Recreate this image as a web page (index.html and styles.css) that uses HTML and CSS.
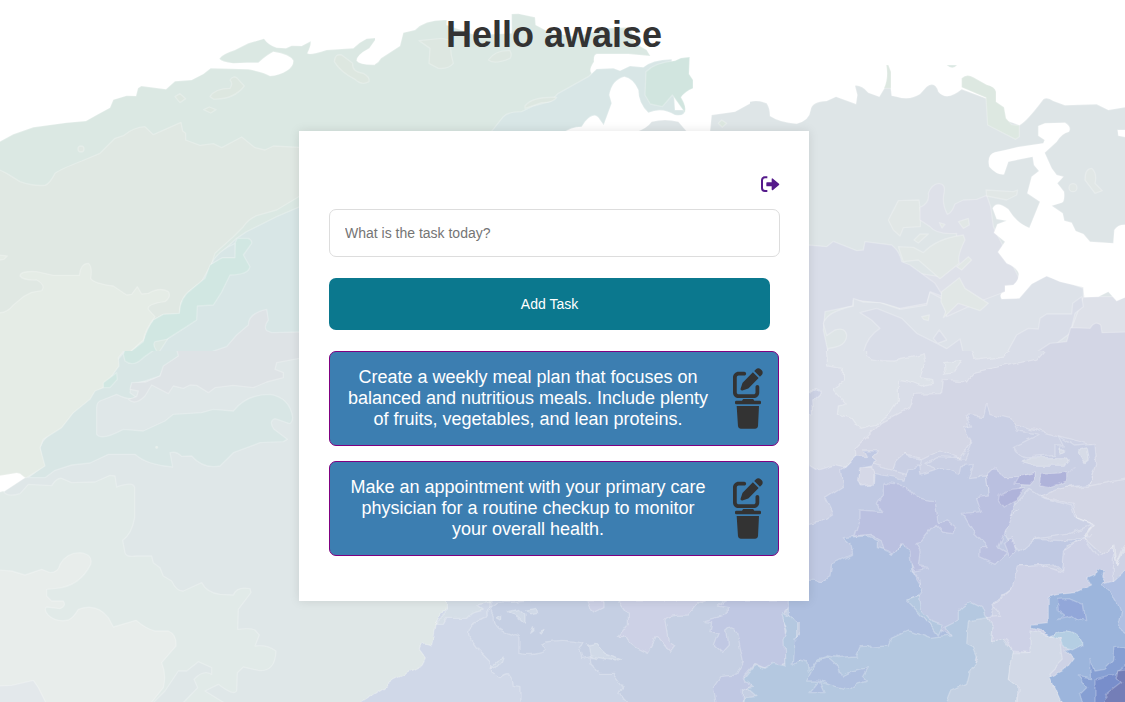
FILE: index.html
```html
<!DOCTYPE html>
<html lang="en">
<head>
<meta charset="utf-8">
<title>Hello awaise</title>
<link rel="stylesheet" href="styles.css">
</head>
<body>
<svg class="backdrop" viewBox="0 0 1125 702" aria-hidden="true">
  <defs>
    <!-- roughens the watercolour edges -->
    <filter id="rough" x="-5%" y="-5%" width="110%" height="110%" color-interpolation-filters="sRGB">
      <feTurbulence type="fractalNoise" baseFrequency="0.03" numOctaves="2" seed="4" result="noise"/>
      <feDisplacementMap in="SourceGraphic" in2="noise" scale="20" xChannelSelector="R" yChannelSelector="G"/>
    </filter>
  </defs>
  <!-- upper left wash -->
  <svg x="0" y="0" width="375" height="351" viewBox="0 0 1125 1053">
    <path fill="#dbe8e3" d="M-5 427L40 403 100 382 200 368 258 363 290 345 330 323 340 299 380 287 408 288 414 265 424 258 498 268 525 244 575 240 610 222 632 205 745 208Q790 216 810 228 840 225 860 212 880 200 880 182 870 162 820 155 800 165 775 188L740 188 700 190Q665 185 658 176 665 163 705 150L745 130 792 116Q805 135 830 143L858 145 875 137 905 138 932 124Q934 135 922 160 930 166 980 150L1060 145Q1080 125 1100 116L1130 114 1108 145Q1070 165 1070 182 1080 196 1130 194V1060H-5Z"/>
    <path fill="#e0e8e3" d="M-5 508L20 520 60 545Q100 559 135 556 150 550 165 520 180 508 245 483L300 460 345 415 370 407Q400 382 435 380L460 404 543 367 548 393 557 400 557 420 600 436 640 431 665 443 725 411 765 443 795 450 820 438 900 442H1130V1060H-5Z"/>
    <path fill="#dbe8e3" d="M900 588L830 630 770 647Q745 657 730 680L700 710 645 760 632 800 615 840Q560 870 542 910L538 940 490 943 460 960 430 1020 385 1060H1130V588Z"/>
    <path fill="#d8e6e6" d="M900 620L830 650 740 695 710 715 650 770 630 800 540 960 475 1060H1130V620Z"/>
    <path fill="#d1e7e2" d="M712 715L745 715Q757 722 755 730L730 765 750 800Q745 825 690 825L664 878 640 915 592 918 590 960 560 980 500 1018 465 1025Q455 1035 475 1060H385L430 1025Q440 985 460 960L490 943 538 940Q540 890 575 868L615 835 630 795 660 773 703 773 705 730Z"/>
    <path fill="#d8e6e6" d="M634 792Q650 755 705 730V773H667Z"/>
    <path fill="#dee3e6" d="M620 1060L680 1040 710 1005 745 975Q745 940 800 928L805 960Q790 980 800 992L815 998 900 996H1130V1060Z"/>
    <path fill="#e5ece6" d="M-5 938Q20 940 40 915L70 890 95 877 125 872Q138 855 110 840 70 842 60 828 60 812 110 815L160 826 238 826Q242 790 265 790 278 800 272 835 280 850 340 858 365 875 380 885L395 883 412 860 425 882 445 880Q480 860 505 875 515 890 495 905 440 912 445 928L465 950Q435 990 430 1020L385 1060H-5Z"/>
    <g fill="#dde7e0"><path d="M630 290Q645 265 690 265 700 250 690 240 700 225 712 235L733 258Q700 300 640 297Z"/><path d="M1003 185Q1005 160 1025 165L1058 190Q1055 215 1090 220 1110 230 1107 245 1085 258 1065 238 1020 215 1003 185Z"/><path d="M525 290L540 281 557 296 540 308Z"/><path d="M611 329L628 321 648 329 632 339Z"/></g>
    <circle cx="243" cy="447" r="9" fill="#e0e8e3"/><path d="M-5 765L22 768 12 778-5 781Z" fill="#e5ece6"/>
  </svg>
  <!-- behind the heading -->
  <svg x="375" y="0" width="375" height="140" viewBox="0 0 1125 420">
    <path fill="#dbe8e3" d="M-5 195Q10 190 18 175L75 138 85 98 120 90Q150 58 215 60V75L300 105 410 100V42L430 41 480 52 482 75 520 95 600 110 700 85 765 82 780 130 815 150 826 168 760 162H665Q655 165 657 185 640 210 650 220L560 390 540 425H-5Z"/>
    <path fill="#d8e6e6" d="M345 400L385 350Q400 335 440 335L475 318 525 305 550 280 640 230 665 207 715 205 735 212 765 198 805 202Q830 180 890 178L900 330 930 330Q930 350 900 345 860 320 820 338 790 310 790 270 775 235 748 230 710 240 703 285L710 310 686 375 675 360Q660 330 630 365L620 380Q585 380 565 400L540 425H330Z"/>
    <path fill="#d1e5df" d="M813 215Q840 188 900 182L918 174 944 171 942 222 954 240V265Q930 275 918 292 935 320 930 338L892 285 862 320 826 312 810 285Z"/>
    <path fill="#dee5e7" d="M785 395Q815 385 830 365 870 355 910 365L940 400 1005 395 1010 345 1080 335 1130 308V425H785Z"/>
    <path fill="#dde7e1" d="M132 122L200 115 230 122Q222 150 235 190 220 208 190 205L162 190 165 145ZM340 180Q360 150 405 152 412 165 405 175 360 195 340 180ZM450 318Q470 290 545 292 535 308 500 308L450 325Z"/>
    <path fill="#dce7e0" d="M1030 370L1040 360 1055 370 1042 382Z"/>
  </svg>
  <!-- upper right wash -->
  <svg x="750" y="0" width="375" height="351" viewBox="0 0 1125 1053">
    <path fill="#dee5e7" d="M-5 307Q20 297 50 310 60 325 60 348 90 368 140 371 178 362 182 330 185 305 230 303L258 290 318 312 322 285 315 257Q335 255 355 278L388 290 405 262H422L425 287 440 290Q480 302 510 282L530 260Q555 242 565 275 590 305 635 268L708 295 765 360 808 376Q830 365 880 298 892 290 910 303L945 316 1040 313 1075 330 1130 321V1060H-5Z"/>
    <path fill="#dde8e1" d="M635 262V235Q650 220 670 232L710 254Q735 260 738 275V305L762 322 768 355 785 374 808 376 808 410 797 418 713 375 708 293ZM402 265Q416 235 409 195H415L423 215V265Z"/><path fill="#dbe8e3" d="M590 195H621Q608 212 590 195Z"/>
    <path fill="#e1e7e6" d="M415 660L445 602 507 600 512 640 511 680 460 683 450 708 430 690Z"/>
    <path fill="#dee1e9" d="M510 622Q540 610 535 580 545 552 567 550 588 552 582 580 575 610 592 643 605 640 615 612L640 600 680 598 710 586 722 620 730 680 815 850 750 895 840 870 890 828 920 845 1000 863 1000 890H1130V1060H560L450 960 440 810 570 830 615 780 620 700Q560 705 540 680L510 660Z"/>
    <path fill="#d9dde8" d="M175 735L230 740 250 724 320 752 340 750 345 725 425 735Q450 755 455 785L480 795 555 850 580 890 540 875 530 910 450 925 400 910 310 900 308 918 225 935 220 990 235 1060H175Z"/>
    <path fill="#dde2e9" d="M220 970Q230 935 310 918V895L340 906 390 908 450 928 530 915 540 877 580 898 590 950 700 900 890 828 950 845 1000 865V890L965 985 960 1060H230L235 1045Q290 1040 290 1005 285 980 255 990L230 1007Z"/>
    <path fill="#d9dde8" d="M340 1060Q350 1010 390 985L365 960 330 938 380 925 455 955 500 1000 560 1030 590 1046 630 1017 640 1060ZM770 1060L800 1005 835 985 865 987 870 955 890 942 965 942 968 910 995 890 1000 920 975 940 960 1000 880 1060ZM550 1015L568 990 590 1020 563 1030Z"/>
    <path fill="#d3d6e5" d="M855 1060L900 1030 950 1025 962 983 1020 985Q1035 960 1052 975L1056 998 1130 996V1060Z"/>
    <path fill="#e1e7e6" d="M445 740L490 742 520 758Q560 715 640 705L645 720Q620 770 628 790L570 836 505 780 460 785ZM575 875L628 833 645 865 715 910 690 932 625 910 580 953 587 935 573 905ZM492 720L510 702 535 702 505 729ZM625 665L655 655 658 675 640 685ZM620 800L655 770 665 780 635 810ZM708 570L790 575 803 570 800 585 770 600 710 588ZM1005 540Q1005 505 1025 505 1042 520 1035 550L1057 572 1035 580Z"/>
    <circle cx="969" cy="563" r="12" fill="#e1e7e6"/><path fill="#e1e7e6" d="M568 668L585 673 576 684ZM515 950L538 945 535 962 521 958Z"/>
    <path fill="#fff" d="M865 378L885 370 945 368Q965 380 957 395 935 400 920 425L884 458 905 505 920 525 940 530 922 550 942 575Q945 605 935 608L905 617 938 640 943 662 965 668 977 693 1000 702 1020 725 1090 730 1093 690Q1105 672 1130 675V890L1100 903 1075 875 1045 890 1003 892 1000 862 930 845 890 828 845 852 808 895 755 897Q745 880 765 875V857L790 855Q808 840 806 820 798 800 770 790L744 756 765 725 732 698 742 673 770 662 740 657 728 625Q740 600 775 628 800 670 838 684L870 605 832 580 845 530 867 513 852 495 848 470 775 485 762 523Q740 525 718 500 710 465 735 457 770 450 805 441L880 430 884 420 865 407ZM1103 390L1130 390V412L1105 407Z"/>
  </svg>
  <!-- lower left wash -->
  <svg x="0" y="351" width="310" height="351" viewBox="0 0 930 1053">
    <path fill="#dfe7e8" d="M-5-5H935V1060H-5Z"/>
    <path fill="#d8e6e5" d="M380-5H590L530 20 490 55 480 75 435 90 395 100 390 125 410 140Q390 150 350 130L300 150Q290 155 290 170V250Q305 270 370 235L430 240 495 210 520 190 605 185 640 175 700 180Q740 130 810 130 870 140 878 200 875 225 860 215L825 203Q805 210 822 235L862 265 850 272 780 275 700 305 660 345Q610 355 575 315L545 316Q530 300 510 305L518 348Q440 342 405 310H325L270 336 215 342 165 358 135 380H85L130 345 120 290Q130 255 180 230Z"/>
    <path fill="#e5ece6" d="M-5-5H375L355 20 357 45 310 110 285 120 270 145 220 185 185 230 130 265 120 290 135 345 80 380-5 375Z"/>
    <path fill="#d1e7e2" d="M375-5H465L430 20Q400 50 375 30L370 10ZM350 65L352 85 330 110 310 110V95Z"/>
    <path fill="#dee3e6" d="M530-5L535 15 490 45 480 75 438 93 395 95 390 115 415 120 410 137 385 145Q405 165 435 135L455 102 505 128 520 105 550 112 570 102 590 103 625 125 645 110 700 103 760 110 800 93 850 80 850 65 825 55 830 35 935 15V-5Z"/>
    <path fill="#fff" d="M-5 375L50 366 60 368 75 380 10 423-5 426Z"/>
    <path fill="#e1eae8" d="M-5 425L10 420Q20 440 60 428L85 400 155 404Q170 380 185 382L215 395 285 393 330 373 345 375 350 408Q400 390 404 410V500Q395 550 368 568L375 605Q380 620 410 615H455L460 635 480 650 490 675 515 690Q530 722 550 720L605 695Q620 725 660 730L700 732Q710 705 750 713L753 725 715 775 713 835Q750 830 765 837L778 852 765 885Q800 880 828 900 825 965 775 958L730 948 712 965 710 1020Q700 1035 655 1000L615 1020 680 1060H-5Z"/>
    <path fill="#e8edeb" d="M-5 657L35 660 75 672 125 655 150 665Q175 665 180 640 200 605 240 605 280 610 272 640 240 705 170 712L140 715V735L155 750 190 750Q200 765 180 773L140 768Q130 775 145 793 170 815 205 807 220 800 235 775 290 755 325 800L340 828 408 808Q440 835 465 840L505 840Q530 850 528 885L485 935Q500 970 490 1010L450 1060H-5Z"/>
    <path fill="#e3e8eb" d="M-5 1005L35 1003 100 988 115 1010 140 1060H-5Z"/>
    <path fill="#dfe7e8" d="M455 1060L495 1020 535 960 560 960 595 932 635 950V970Q610 955 582 985L593 1010 545 1060Z"/><circle cx="470" cy="289" r="3" fill="#e5ece6"/>
  </svg>
  <!-- below the panel -->
  <svg x="300" y="590" width="520" height="112" viewBox="0 0 1560 336">
    <path fill="#dfe7e7" d="M-15-15H500V350H-15Z"/>
    <g filter="url(#rough)">
    <path fill="#d0d8e8" d="M437-15V50L405 105 395 165Q360 150 358 175L380 205 370 225 280 270 245 297 160 350H1580V-15Z"/>
    <path fill="#d5dee7" d="M437 20L435 80 405 103 430 103 440 85 500 85 515 70 550 60 530 45 600 30Z"/>
    <path fill="#cbd4e6" d="M570 55L545 90Q500 100 507 140L535 180 570 215 575 245 600 263Q635 230 640 290L660 293V350H1300V-15H570Z"/>
    <path fill="#c5cfe3" d="M570 55L590 40 690 33V-15H1580V350H990L960 310 970 290 940 250 895 250Q870 220 875 200L845 205 838 175 855 160Q800 145 740 156L722 162 735 182Q705 200 660 190V140Q650 125 635 135 575 120 580 75Z"/>
    <path fill="#cdd1e6" d="M955 30H1210L1185 50 1165 75Q1095 75 1095 92L1105 150 1125 165 1110 185 1070 140 1045 187 1000 165 970 140H955L985 100 985 70ZM862 30H912V50L880 66Z"/>
    <path fill="#c0c8e3" d="M1275 30H1490L1450 75 1460 130 1455 220 1400 235 1365 220 1330 260 1360 285 1330 300V350H1250L1240 290 1260 260 1310 255 1330 215 1310 125Q1295 105 1280 120L1285 165 1265 187 1240 165 1255 125 1230 125 1235 98 1215 95 1285 75 1285 50 1255 45Z"/>
    <path fill="#b4c8e0" d="M1330 350L1335 320 1365 317 1340 295 1365 292 1330 268 1365 225 1395 235 1420 220 1455 228 1452 150 1462 120 1445 70 1490 85 1490 215 1580 215V350Z"/>
    <path fill="#aebfdf" d="M1465-15H1580V225L1550 220 1525 235 1510 205 1480 225 1485 150 1505 125 1520 120 1500 95 1485 95 1465 75Z"/>
    <path fill="#d0d9e7" d="M625 65L655 58 675 75V100L655 82ZM680 60L710 55 713 70 690 75ZM865 165L885 160 915 190 962 205 950 213 870 198ZM570 235L590 215 610 207 605 222ZM590 80L605 73V88ZM717 122L735 115 722 131ZM692 130L700 110 702 122Z"/>
    </g>
  </svg>
  <!-- lower right wash -->
  <svg x="800" y="351" width="325" height="351" viewBox="0 0 975 1053">
    <path fill="#d9dde8" d="M-5-5H980V1060H-5Z"/>
    <g filter="url(#rough)">
    <path fill="#dde2e9" d="M75-15H200V20Q230 30 280 30L330 20 370 8 375 35 360 80 398 85 400 97 365 105 325 90 295 85V150L265 190 230 220 180 232 160 203 112 190 115 165 135 160 95 115 130 90V52L80 45ZM510-15H640L615 15 525 28ZM430 35L483 28 460 65 433 70Z"/>
    <path fill="#d3d6e5" d="M745-15L710 25 645 38 520 68 500 93 430 88 425 128 345 130 330 170 245 215 165 295 170 330 290 400 460 500H995V-15Z"/>
    <path fill="#cdd2e5" d="M5 330L50 358 100 343 130 350 165 325 280 355 315 308 370 325 420 300 475 325 515 270 500 200 590 205 870 280 885 340 870 405 820 430 830 500 880 520 850 550 870 560 910 615 940 600 950 640 995 560V1070H5ZM5 140L50 113 62 125 35 150 38 190 5 180Z"/>
    <path fill="#d3d6e5" d="M720 435L740 420 790 410 870 405 995 380V560L970 590 950 640 945 585 910 615 850 560 880 520 830 500 820 460Z"/>
    <path fill="#c9cfe4" d="M560 160L570 188 640 205 655 240 720 250 640 290Q640 310 680 318L765 310 765 285 790 285 775 255 820 285 885 280 890 340 870 400 790 410 720 435 600 520 500 450 455 370 375 340 415 320 495 325 515 275 490 230 515 225 498 192 550 200ZM280 360L290 330 315 308 335 320 365 325 360 345 320 370Z"/>
    <path fill="#d6dbe7" d="M665 330L690 320H795L805 330 795 343H700ZM835 300L862 293 868 325 855 335ZM780 290L795 300 780 308Z"/>
    <path fill="#c0c9e3" d="M165 318L200 320 190 300H235L215 318 228 328 215 345 175 355 180 400 215 403 222 367 315 385 325 355 355 345 360 370 425 350 480 370 485 345 520 340 505 380 560 375 570 480 620 545 650 580 700 565 810 570 875 548 800 585 785 660 760 640 660 645 640 710 590 745 580 770 560 850 500 900 5 900V520L70 510 100 490 75 440 130 405 125 360Z"/>
    <path fill="#d5d8e7" d="M177 350L215 348 222 370 220 400 185 405 173 388Z"/>
    <path fill="#cbd1e5" d="M600 520L655 480 630 475 690 415 730 440 815 465 825 500 875 520 800 550 700 565 660 600 620 560Z"/>
    <path fill="#bac0e0" d="M250 397L320 405Q335 450 405 452L415 515 440 510 467 530 455 545 425 540 405 520 365 570 345 575 360 600 355 645 385 650 340 660 320 610 300 575 285 610 255 605 245 570 210 550 165 555 180 510V480L245 485 232 460 250 430ZM560 370L580 352 615 380 645 380 680 370 645 440 640 480 595 590 620 605 585 640 540 620V590L565 590 525 550 490 490 545 485 530 440 565 435ZM610 575L635 560 650 600 630 622 620 600ZM335 660L360 690 362 715 340 690Z"/>
    <path fill="#afb3da" d="M645 400L660 375 705 365V385L690 402ZM720 405L725 370 790 365 825 353 800 365V390L745 410ZM595 450L598 433 635 415 675 410 655 440 610 468Z"/>
    <path fill="#aebfdf" d="M5 688H40L65 692 90 675 95 640 155 610 150 580 130 560 200 555 235 570 235 590 265 600 280 610 305 575 330 600 335 660 365 710 355 735 325 745 390 820 450 855 400 940 200 1070H-15V688Z"/>
    <path fill="#b4c8e0" d="M-15 920L20 930 25 960 50 925 85 915 115 920 170 915 180 890 265 885 270 865 325 840 390 862 450 855 435 830 475 810V780Q490 760 515 755L545 770 555 795 600 830 530 920 500 1070H-15ZM320 747L355 735 360 770 395 810 430 820 415 855 380 810Z"/>
    <path fill="#aebfdf" d="M20 990L50 930 85 920 115 945 125 975 155 960 205 950 190 975 205 990 170 1000 150 1015 80 1000 55 990ZM30 1025L60 990 75 1025Z"/>
    <path fill="#c3d0e2" d="M505 810L560 800 580 820 575 875 610 860 640 900 625 985 650 1000V1070H435L455 1020 500 1000 510 960 535 925 520 890 500 880Z"/>
    <path fill="#cdd1e6" d="M655 645L720 640 785 663 790 600 850 560 890 615 940 590V690L895 800 800 850 690 905 640 900 620 860 575 875 580 830 560 800 605 795 580 760 635 715Z"/>
    <path fill="#d2d9e7" d="M690 840L730 850 780 860 790 930 750 970 790 1070H650L655 1010 625 985 635 905 690 905Z"/>
    <path fill="#aebfe2" d="M905 700L940 690 995 640V1070H930Z"/>
    <path fill="#9cb5dc" d="M860 680L885 670 890 655 910 660 905 675 915 690 905 705Q950 730 965 785L955 830 995 860V1070H790L750 980 790 960 820 920 795 900 850 880Q840 850 800 840L750 855 730 840 695 832V820L745 815V740Q755 730 830 725L875 705Z"/>
    <path fill="#b4cee3" d="M755 855L785 840Q835 835 852 880L820 897 790 890 785 865Z"/>
    <path fill="#92a7d9" d="M772 745L810 743 850 760 857 812 830 805 815 795 770 803 795 790 775 775Z"/>
    <path fill="#869fd3" d="M870 925L885 960 915 955 940 930 945 890 995 885V1070H850L840 1030 860 1010 835 975 875 980Z"/>
    <path fill="#788ecb" d="M885 1070V985L940 970 995 930V1070Z"/>
    <path fill="#747eb7" d="M905 1070L920 1030 965 995 945 985 950 960 995 955V1070Z"/>
    </g>
  </svg>
</svg>
<main class="page">
  <h1 class="greeting">Hello awaise</h1>
  <section class="card">
    <a class="logout" aria-label="Log out"><svg width="20" height="18" viewBox="60 45 60 54"><path d="M82 52H75Q66 52 66 61V84Q66 93 75 93H82" fill="none" stroke="currentColor" stroke-width="6"/><path d="M81 67H95V58Q95 53 99 56L117 71Q119 73 117 75L99 90Q95 92 95 87V79H81Q79 79 79 77V69Q79 67 81 67Z" fill="currentColor"/></svg></a>
    <input class="task-input" type="text" placeholder="What is the task today?">
    <button class="add-button">Add Task</button>
    <div class="tasks">
      <article class="task"><p class="task-text">Create a weekly meal plan that focuses on balanced and nutritious meals. Include plenty of fruits, vegetables, and lean proteins.</p>
        <div class="actions">
          <svg width="30" height="30" viewBox="0 0 512 512"><path d="M471.6 21.7c-21.9-21.9-57.3-21.9-79.2 0L362.3 51.7l97.9 97.9 30.1-30.1c21.9-21.9 21.9-57.3 0-79.2L471.6 21.7zm-299.2 220c-6.1 6.1-10.8 13.6-13.5 21.9l-29.6 88.8c-2.9 8.6-.6 18.1 5.8 24.6s15.9 8.7 24.6 5.8l88.8-29.6c8.2-2.7 15.7-7.4 21.9-13.5L437.7 172.3 339.7 74.3 172.4 241.7zM96 64C43 64 0 107 0 160V416c0 53 43 96 96 96H352c53 0 96-43 96-96V320c0-17.7-14.3-32-32-32s-32 14.3-32 32v96c0 17.7-14.3 32-32 32H96c-17.7 0-32-14.3-32-32V160c0-17.7 14.3-32 32-32h96c17.7 0 32-14.3 32-32s-14.3-32-32-32H96z"/></svg>
          <svg width="30" height="32" viewBox="0 0 90 96"><path d="M29 5Q29 3 32 3H59Q62 3 62 5L64 8H80Q84 8 84 12V15Q84 19 80 19H10Q6 19 6 15V12Q6 8 10 8H27ZM11 24H78L75 85Q74 92 67 92H23Q16 92 15 85Z"/></svg>
        </div></article>
      <article class="task"><p class="task-text">Make an appointment with your primary care physician for a routine checkup to monitor your overall health.</p>
        <div class="actions">
          <svg width="30" height="30" viewBox="0 0 512 512"><path d="M471.6 21.7c-21.9-21.9-57.3-21.9-79.2 0L362.3 51.7l97.9 97.9 30.1-30.1c21.9-21.9 21.9-57.3 0-79.2L471.6 21.7zm-299.2 220c-6.1 6.1-10.8 13.6-13.5 21.9l-29.6 88.8c-2.9 8.6-.6 18.1 5.8 24.6s15.9 8.7 24.6 5.8l88.8-29.6c8.2-2.7 15.7-7.4 21.9-13.5L437.7 172.3 339.7 74.3 172.4 241.7zM96 64C43 64 0 107 0 160V416c0 53 43 96 96 96H352c53 0 96-43 96-96V320c0-17.7-14.3-32-32-32s-32 14.3-32 32v96c0 17.7-14.3 32-32 32H96c-17.7 0-32-14.3-32-32V160c0-17.7 14.3-32 32-32h96c17.7 0 32-14.3 32-32s-14.3-32-32-32H96z"/></svg>
          <svg width="30" height="32" viewBox="0 0 90 96"><path d="M29 5Q29 3 32 3H59Q62 3 62 5L64 8H80Q84 8 84 12V15Q84 19 80 19H10Q6 19 6 15V12Q6 8 10 8H27ZM11 24H78L75 85Q74 92 67 92H23Q16 92 15 85Z"/></svg>
        </div></article>
    </div>
  </section>
</main>
</body>
</html>
```
FILE: styles.css
```css
* { box-sizing: border-box; }
body {
  margin: 0;
  height: 702px;
  overflow: hidden;
  background: #fff;
  color: #333;
  font-family: Arial, "Liberation Sans", sans-serif;
}
.backdrop {
  position: absolute;
  inset: 0;
  width: 1125px;
  height: 702px;
  z-index: -1;
}
.backdrop path, .backdrop circle {
  stroke: #fff;
  stroke-opacity: .24;
  stroke-width: 4;
  stroke-linejoin: round;
}
.page {
  display: flex;
  flex-direction: column;
  align-items: center;
  gap: 76px;
  padding: 14px 17px 0 0;
}
.greeting {
  margin: 0;
  font-size: 36px;
  line-height: 41px;
}
.card {
  display: flex;
  flex-direction: column;
  width: 510px;
  height: 470px;
  padding: 44px 30px 0;
  background: #fff;
  box-shadow: 0 0 10px rgba(0, 0, 0, .1);
}
.logout {
  display: flex;
  align-self: flex-end;
  height: 34px;
  color: #551a8b;
  margin-right: -1px;
}
.task-input {
  width: 451px;
  height: 48px;
  padding: 0 15px;
  border: 1px solid #ddd;
  border-radius: 7px;
  background: #fff;
  font: 14px Arial, "Liberation Sans", sans-serif;
}
.task-input::placeholder { color: #757575; }
.add-button {
  width: 441px;
  height: 52px;
  margin-top: 21px;
  padding: 0;
  border: 0;
  border-radius: 7px;
  background: #0b788e;
  color: #fff;
  font: 14px Arial, "Liberation Sans", sans-serif;
}
.tasks {
  display: flex;
  flex-direction: column;
  gap: 15px;
  margin-top: 21px;
}
.task {
  display: flex;
  justify-content: space-between;
  height: 95px;
  padding: 15px;
  border: 1px solid purple;
  border-radius: 7px;
  background: #3c7eb1;
}
.task-text {
  width: 366px;
  margin: 0;
  color: #fff;
  font-size: 18px;
  line-height: 21px;
  text-align: center;
}
.actions {
  display: flex;
  flex-direction: column;
  width: 30px;
  margin-top: 1px;
  fill: #333;
}
.actions svg { display: block; flex: none; }
```
